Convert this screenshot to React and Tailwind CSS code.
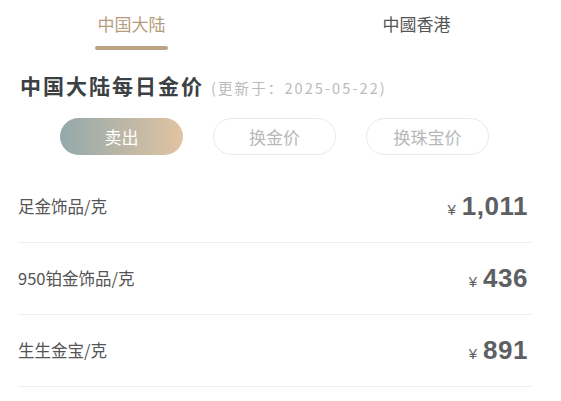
export default function App() {
  const rows = [
    { name: '足金饰品/克', price: '1,011' },
    { name: '950铂金饰品/克', price: '436' },
    { name: '生生金宝/克', price: '891' },
  ];
  const cjk = "font-['Noto_Sans_CJK_SC','Noto_Sans',sans-serif]";

  return (
    <div className={`w-[561px] h-[401px] bg-white overflow-hidden ${cjk}`}>
      {/* tabs */}
      <div className="flex pt-[12px]">
        <div className="ml-[95px] w-[73px] flex flex-col items-center">
          <span className="text-[17px] leading-[24px] text-[#b59c7d]">中国大陆</span>
          <div className="mt-[10px] h-[4px] w-full rounded-full bg-[#baa283]" />
        </div>
        <div className="ml-[212px] w-[73px] flex flex-col items-center">
          <span className="text-[17px] leading-[24px] text-[#555]">中國香港</span>
        </div>
      </div>

      {/* heading */}
      <div className="flex items-baseline pl-[20px] mt-[21px]">
        <h1 className="text-[21px] leading-[28px] font-bold tracking-[2px] text-[#3b4043]">中国大陆每日金价</h1>
        <span className="ml-[7px] text-[14.5px] tracking-[2.1px] text-[#bbbbbb]">(更新于：2025-05-22)</span>
      </div>

      {/* pills */}
      <div className="flex gap-[30px] pl-[60px] mt-[19px]">
        <button className="w-[123px] h-[37px] rounded-full bg-gradient-to-r from-[#93a9aa] to-[#e1c3a1] text-white text-[17px] flex items-center justify-center">
          卖出
        </button>
        <button className="w-[123px] h-[37px] rounded-full border border-[#e9e9e9] text-[#b8b8b8] text-[17px] flex items-center justify-center">
          换金价
        </button>
        <button className="w-[123px] h-[37px] rounded-full border border-[#e9e9e9] text-[#b8b8b8] text-[17px] flex items-center justify-center">
          换珠宝价
        </button>
      </div>

      {/* price list */}
      <div className="ml-[18px] mr-[28px] mt-[16px]">
        {rows.map((r) => (
          <div key={r.name} className="h-[72px] flex items-center justify-between border-b border-[#efefef] pr-[5px]">
            <span className="text-[16.5px] text-[#555]">{r.name}</span>
            <span className="flex items-baseline text-[#5d6063]">
              <span className="text-[15px] mr-[6px] font-['Liberation_Sans',Arial,sans-serif]">¥</span>
              <span className="text-[26px] font-bold font-['Liberation_Sans',Arial,sans-serif] tracking-[0.5px]">{r.price}</span>
            </span>
          </div>
        ))}
      </div>
    </div>
  );
}
